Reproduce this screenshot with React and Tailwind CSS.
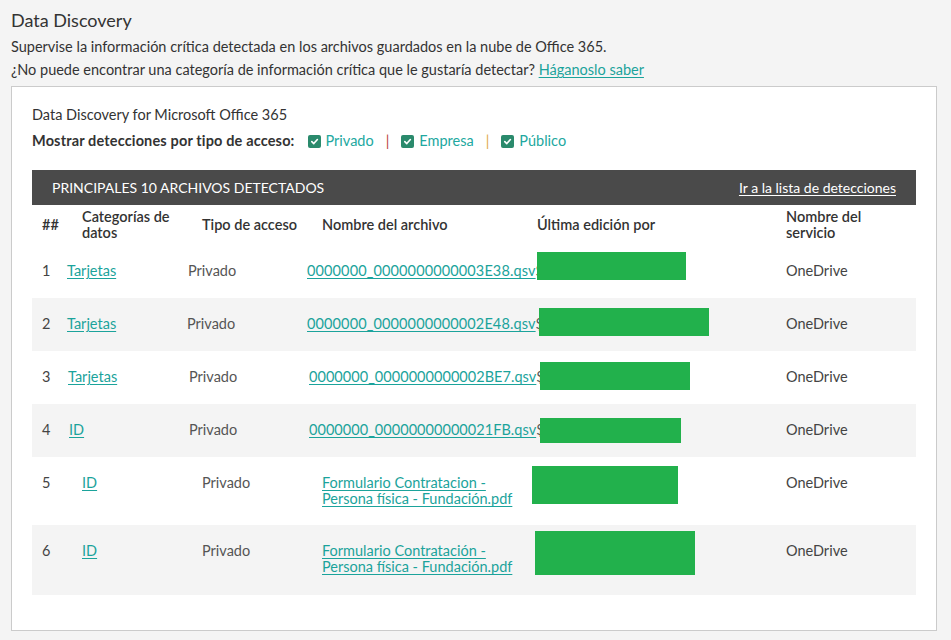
import React from "react";

const Check = () => (
  <span className="inline-flex items-center justify-center w-[13px] h-[13px] rounded-[2px] bg-[#2a8a6c] mr-[5px]">
    <svg width="9" height="9" viewBox="0 0 10 10" fill="none">
      <path d="M2 5.2 L4.2 7.3 L8.2 2.8" stroke="white" strokeWidth="1.8" strokeLinecap="round" strokeLinejoin="round" />
    </svg>
  </span>
);

const rows = [
  { n: 1, cat: "Tarjetas", file: "0000000_0000000000003E38.qsv", dollar: true, track: "tracking-[0.12px]", grid: "grid-cols-[25px_121px_119px_230px_249px_1fr]", box: "mt-[7px] h-[28px] w-[149px]", row: "bg-white pb-[19px]" },
  { n: 2, cat: "Tarjetas", file: "0000000_0000000000002E48.qsv", dollar: true, track: "tracking-[0.12px]", grid: "grid-cols-[25px_120px_120px_232px_247px_1fr]", box: "mt-[10px] h-[28px] w-[170px]", row: "bg-[#f4f4f4] pb-[19px]" },
  { n: 3, cat: "Tarjetas", file: "0000000_0000000000002BE7.qsv", dollar: true, track: "tracking-[0.04px]", grid: "grid-cols-[26px_121px_120px_231px_246px_1fr]", box: "mt-[11px] h-[28px] w-[150px]", row: "bg-white pb-[19px]" },
  { n: 4, cat: "ID", file: "0000000_00000000000021FB.qsv", dollar: true, track: "tracking-[0.04px]", grid: "grid-cols-[27px_120px_120px_231px_246px_1fr]", box: "mt-[14px] h-[25px] w-[141px]", row: "bg-[#f4f4f4] pb-[19px]" },
  { n: 5, cat: "ID", file: "Formulario Contratacion - Persona física - Fundación.pdf", dollar: false, track: "", grid: "grid-cols-[40px_120px_120px_210px_254px_1fr]", box: "mt-[9px] h-[38px] w-[146px]", row: "bg-white pb-[18px]" },
  { n: 6, cat: "ID", file: "Formulario Contratación - Persona física - Fundación.pdf", dollar: false, track: "", grid: "grid-cols-[40px_120px_120px_213px_251px_1fr]", box: "mt-[6px] h-[44px] w-[160px]", row: "bg-[#f4f4f4] pb-[20px]" },
];

export default function App() {
  return (
    <div className="min-h-[640px] bg-[#f4f4f4] text-[#333] text-[14.5px] px-[11px] pt-[9px] pb-[8px]" style={{ fontFamily: "Lato, 'Noto Sans', sans-serif" }}>
      <h1 className="text-[18px] leading-[22px] text-[#333]">Data Discovery</h1>
      <p className="mt-[4px] leading-[23px]">Supervise la información crítica detectada en los archivos guardados en la nube de Office 365.</p>
      <p className="leading-[23px]">
        ¿No puede encontrar una categoría de información crítica que le gustaría detectar?{" "}
        <a className="text-[#1ba39b] underline underline-offset-2">Háganoslo saber</a>
      </p>
      <div className="mt-[5px] w-[926px] border border-[#cbcbcb] bg-white px-[20px] pt-[18px] pb-[35px]">
        <div className="leading-[20px]">Data Discovery for Microsoft Office 365</div>
        <div className="mt-[6px] flex items-center leading-[20px]">
          <span className="font-bold tracking-[0.15px] mr-[13px]">Mostrar detecciones por tipo de acceso:</span>
          <Check />
          <span className="text-[#22a8a0]">Privado</span>
          <span className="mx-[12px] text-[#b8403d]">|</span>
          <Check />
          <span className="text-[#22a8a0]">Empresa</span>
          <span className="mx-[12px] text-[#e0a648]">|</span>
          <Check />
          <span className="text-[#22a8a0]">Público</span>
        </div>
        <div className="mt-[19px] h-[35px] bg-[#4a4a4a] text-white text-[14px] flex items-center justify-between px-[20px]">
          <span className="uppercase">Principales 10 archivos detectados</span>
          <a className="underline underline-offset-2">Ir a la lista de detecciones</a>
        </div>
        <div className="grid grid-cols-[40px_120px_120px_215px_249px_1fr] items-center pl-[10px] py-[4px] font-semibold leading-[16px] text-[#333]">
          <span>##</span>
          <span>Categorías de<br />datos</span>
          <span>Tipo de acceso</span>
          <span>Nombre del archivo</span>
          <span>Última edición por</span>
          <span>Nombre del<br />servicio</span>
        </div>
        {rows.map((r) => (
          <div key={r.n} className={`grid items-start pl-[10px] pt-[18px] leading-[16px] ${r.grid} ${r.row}`}>
            <span className="text-[#444]">{r.n}</span>
            <span><a className="text-[#1ba39b] underline underline-offset-2">{r.cat}</a></span>
            <span className="text-[#555]">Privado</span>
            <span className={r.dollar ? `whitespace-nowrap ${r.track}` : "max-w-[200px]"}>
              <a className="text-[#1ba39b] underline underline-offset-2">{r.file}</a>
              {r.dollar && <span className="text-[#555]">$</span>}
            </span>
            <span className="relative h-[16px] -mt-[18px]">
              <div className={`bg-[#22b14c] ${r.box}`} />
            </span>
            <span className="text-[#444]">OneDrive</span>
          </div>
        ))}
      </div>
    </div>
  );
}
